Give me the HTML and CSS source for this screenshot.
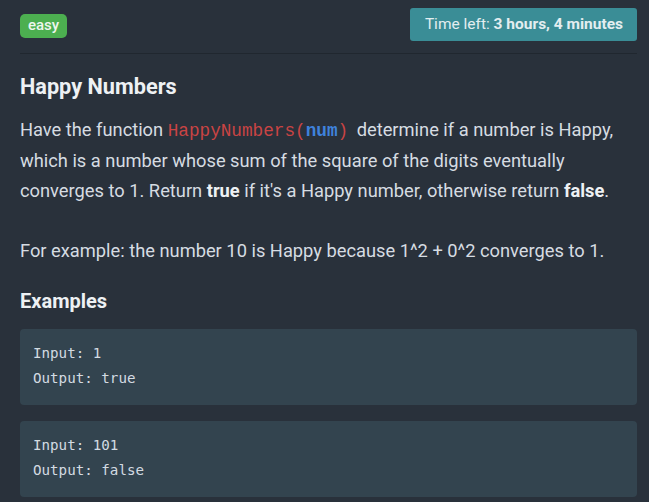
FILE: index.html
```html
<!DOCTYPE html>
<html>
<head>
<meta charset="utf-8">
<link rel="stylesheet" href="styles.css">
</head>
<body>
<div class="page">
  <div class="topbar">
    <span class="badge">easy</span>
    <span class="timer">Time left: <b>3 hours, 4 minutes</b></span>
  </div>
  <h1 class="title">Happy Numbers</h1>
  <p class="desc">Have the function <code class="fn">HappyNumbers(<span class="arg">num</span>)</code> determine if a number is Happy, which is a number whose sum of the square of the digits eventually converges to 1. Return <b>true</b> if it's a Happy number, otherwise return <b>false</b>.</p>
  <p class="desc gap">For example: the number 10 is Happy because 1^2 + 0^2 converges to 1.</p>
  <h2 class="sub">Examples</h2>
  <div class="example">
    <div>Input: 1</div>
    <div>Output: true</div>
  </div>
  <div class="example">
    <div>Input: 101</div>
    <div>Output: false</div>
  </div>
</div>
</body>
</html>
```
FILE: styles.css
```css
html, body {
  margin: 0;
  padding: 0;
  background: #29313b;
}
body {
  font-family: Roboto, "Liberation Sans", sans-serif;
  color: #d6dce2;
}
.page {
  padding: 8px 12px 0 20px;
}
.topbar {
  display: flex;
  justify-content: space-between;
  align-items: flex-start;
  padding-bottom: 12px;
  border-bottom: 1px solid #20272f;
}
.badge {
  margin-top: 6px;
  background: #4caf50;
  color: #eef6ee;
  font-size: 15px;
  font-weight: 500;
  padding: 3px 8px 4px;
  border-radius: 5px;
  line-height: 17px;
}
.timer {
  background: #3a8d96;
  color: #e3eef0;
  font-size: 15.5px;
  line-height: 19px;
  padding: 7px 14px 7px 15px;
  border-radius: 3px;
}
.timer b {
  font-weight: 700;
}
.title {
  margin: 20px 0 0;
  font-size: 21.7px;
  font-weight: 700;
  line-height: 26px;
  color: #eef1f4;
}
.desc {
  margin: 15px 0 0;
  font-size: 18.3px;
  line-height: 30px;
}
.desc b {
  font-weight: 700;
  color: #eef1f4;
}
.desc.gap {
  margin-top: 30px;
}
.fn {
  font-family: "Liberation Mono", "Courier New", monospace;
  font-size: 17.7px;
  color: #c94444;
  padding-right: 4px;
}
.arg {
  color: #3f82dc;
  font-weight: 700;
}
.sub {
  margin: 22px 0 0;
  font-size: 20px;
  font-weight: 700;
  line-height: 26px;
  color: #eef1f4;
}
.example {
  margin-top: 15px;
  background: #33444f;
  border-radius: 4px;
  padding: 12px 13px 14px;
  font-family: "DejaVu Sans Mono", monospace;
  font-size: 14.2px;
  line-height: 25px;
  color: #d3dbe2;
}
.example + .example {
  margin-top: 16px;
}
```
